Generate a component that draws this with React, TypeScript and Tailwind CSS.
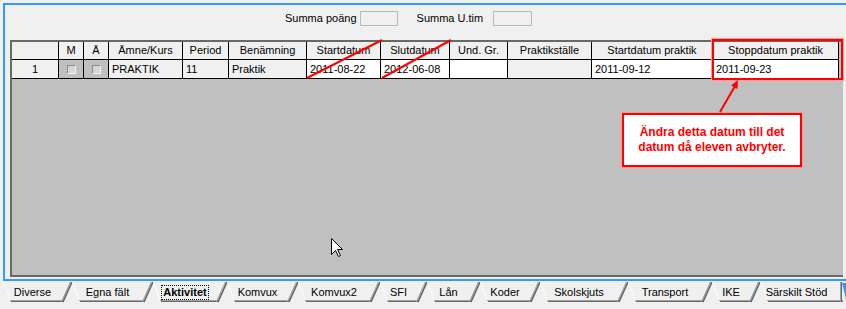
import React from 'react';

type Col = { label: string; w: number; value?: string; bg: string; align?: 'center' | 'left'; check?: boolean };

const columns: Col[] = [
  { label: '', w: 47, value: '1', bg: 'bg-[#f0f0f0]', align: 'center' },
  { label: 'M', w: 25, bg: 'bg-[#c0c0c0]', check: true },
  { label: 'Ä', w: 25, bg: 'bg-[#c0c0c0]', check: true },
  { label: 'Ämne/Kurs', w: 74, value: 'PRAKTIK', bg: 'bg-[#f0f0f0]' },
  { label: 'Period', w: 46, value: '11', bg: 'bg-[#f0f0f0]' },
  { label: 'Benämning', w: 78, value: 'Praktik', bg: 'bg-[#f0f0f0]' },
  { label: 'Startdatum', w: 74, value: '2011-08-22', bg: 'bg-white' },
  { label: 'Slutdatum', w: 69, value: '2012-06-08', bg: 'bg-white' },
  { label: 'Und. Gr.', w: 58, value: '', bg: 'bg-white' },
  { label: 'Praktikställe', w: 84, value: '', bg: 'bg-[#f0f0f0]' },
  { label: 'Startdatum praktik', w: 121, value: '2011-09-12', bg: 'bg-white' },
  { label: 'Stoppdatum praktik', w: 126, value: '2011-09-23', bg: 'bg-white' },
];

const tabs = [
  { label: 'Diverse', w: 69 },
  { label: 'Egna fält', w: 81 },
  { label: 'Aktivitet', w: 74, active: true },
  { label: 'Komvux', w: 71 },
  { label: 'Komvux2', w: 82 },
  { label: 'SFI', w: 47 },
  { label: 'Lån', w: 53 },
  { label: 'Koder', w: 60 },
  { label: 'Skolskjuts', w: 88 },
  { label: 'Transport', w: 84 },
  { label: 'IKE', w: 48 },
  { label: 'Särskilt Stöd', w: 83, last: true },
];

const Tab: React.FC<{ label: string; w: number; active?: boolean; last?: boolean }> = ({ label, w, active, last }) => {
  const h = 20;
  return (
    <div className="relative h-[20px] flex items-center justify-center pr-[10px] shrink-0" style={{ width: w }}>
      <svg className="absolute left-0 top-0 overflow-visible" width={w} height={h}>
        {/* left edge highlight */}
        <line x1={0.5} y1={0} x2={7.5} y2={h - 1} stroke="#ffffff" strokeWidth={1} />
        {/* bottom shadow */}
        <line x1={7} y1={h - 1.5} x2={last ? w : w - 9} y2={h - 1.5} stroke="#a0a0a0" strokeWidth={1} />
        <line x1={8} y1={h - 0.5} x2={last ? w : w - 9} y2={h - 0.5} stroke="#696969" strokeWidth={1} />
        {/* right edge shadow */}
        {last ? (
          <>
            <line x1={w - 2.5} y1={0} x2={w - 2.5} y2={h} stroke="#a0a0a0" strokeWidth={1} />
            <line x1={w - 1.5} y1={0} x2={w - 1.5} y2={h} stroke="#696969" strokeWidth={1} />
          </>
        ) : (
          <>
            <line x1={w - 1.5} y1={0} x2={w - 10.5} y2={h} stroke="#a0a0a0" strokeWidth={1.2} />
            <line x1={w} y1={0} x2={w - 9} y2={h} stroke="#5a5a5a" strokeWidth={1.4} />
          </>
        )}
      </svg>
      {active ? (
        <span className="relative font-bold border border-dotted border-black px-[1px] leading-[13px]">{label}</span>
      ) : (
        <span className="relative">{label}</span>
      )}
    </div>
  );
};

const Checkbox: React.FC = () => (
  <div className="w-[9px] h-[9px] border border-t-[#8a8a8a] border-l-[#8a8a8a] border-r-[#f4f4f4] border-b-[#f4f4f4] bg-[#d6d6d6]" />
);

export default function App() {
  return (
    <div className="relative w-[846px] h-[309px] overflow-hidden bg-[#f0f0f0] text-[11px] text-black font-['Liberation_Sans',Arial,sans-serif]">
      {/* panel frame */}
      <div className="ml-[3px] mt-[3px] w-[850px] h-[278px] border-l-2 border-t-2 border-b-2 border-[#3399ff] flex flex-col">
        {/* sum row */}
        <div className="mt-[6px] ml-[280px] h-[15px] flex items-center">
          <span>Summa poäng</span>
          <div className="ml-[3px] w-[38px] h-[15px] border border-[#b9b9b9]" />
          <span className="ml-[19px]">Summa U.tim</span>
          <div className="ml-[10px] w-[39px] h-[15px] border border-[#b9b9b9]" />
        </div>

        {/* grid */}
        <div className="ml-[5px] mt-[14px] w-[833px] h-[237px] border-l-2 border-t-2 border-b-2 border-[#696969] bg-[#c0c0c0] flex flex-col">
          <div className="flex h-[18px]">
            {columns.map((c, i) => (
              <div
                key={i}
                className="h-full shrink-0 bg-[#f0f0f0] border-r border-b border-black flex items-center justify-center whitespace-nowrap"
                style={{ width: c.w }}
              >
                {c.label}
              </div>
            ))}
          </div>
          <div className="flex h-[19px]">
            {columns.map((c, i) => (
              <div
                key={i}
                className={`h-full shrink-0 ${c.bg} border-r border-b border-black flex items-center whitespace-nowrap ${
                  c.check || c.align === 'center' ? 'justify-center' : 'pl-[3px]'
                }`}
                style={{ width: c.w }}
              >
                {c.check ? <Checkbox /> : c.value}
              </div>
            ))}
          </div>
        </div>
      </div>

      {/* tab strip */}
      <div className="ml-[3px] mt-[1px] flex">
        {tabs.map((t) => (
          <Tab key={t.label} {...t} />
        ))}
      </div>

      {/* highlighted column */}
      <div className="absolute left-[712px] top-[39px] w-[131px] h-[41px] border-2 border-[#ff0000] outline outline-1 outline-[#ff9a9a]" />

      {/* callout */}
      <div className="absolute left-[622px] top-[113px] w-[180px] h-[54px] border-2 border-[#ff0000] outline outline-1 outline-[#ff9a9a] bg-white flex flex-col items-center justify-center text-[12px] leading-[15px] font-bold text-[#ff0000]">
        <span>Ändra detta datum till det</span>
        <span>datum då eleven avbryter.</span>
      </div>

      {/* annotations */}
      <svg className="absolute left-0 top-0 pointer-events-none" width={846} height={309}>
        <line x1={307} y1={78} x2={382} y2={40} stroke="#ff0000" strokeWidth={2} />
        <line x1={382} y1={78} x2={451} y2={40} stroke="#ff0000" strokeWidth={2} />
        <line x1={720} y1={112} x2={735} y2={86} stroke="#ff0000" strokeWidth={2} />
        <polygon points="738,80 737.5,89 731,85.5" fill="#ff0000" />
        <polygon points="842,283 846,283 846,299" fill="#3399ff" />
      </svg>

      {/* mouse pointer */}
      <svg className="absolute left-[331px] top-[238px]" width={13} height={20} viewBox="0 0 13 20">
        <path d="M0.5 0.5 L0.5 16.5 L4.5 12.5 L7.5 18.5 L9.5 17.5 L6.5 11.5 L11.5 11.5 Z" fill="#ffffff" stroke="#000000" strokeWidth={1} />
      </svg>
    </div>
  );
}
